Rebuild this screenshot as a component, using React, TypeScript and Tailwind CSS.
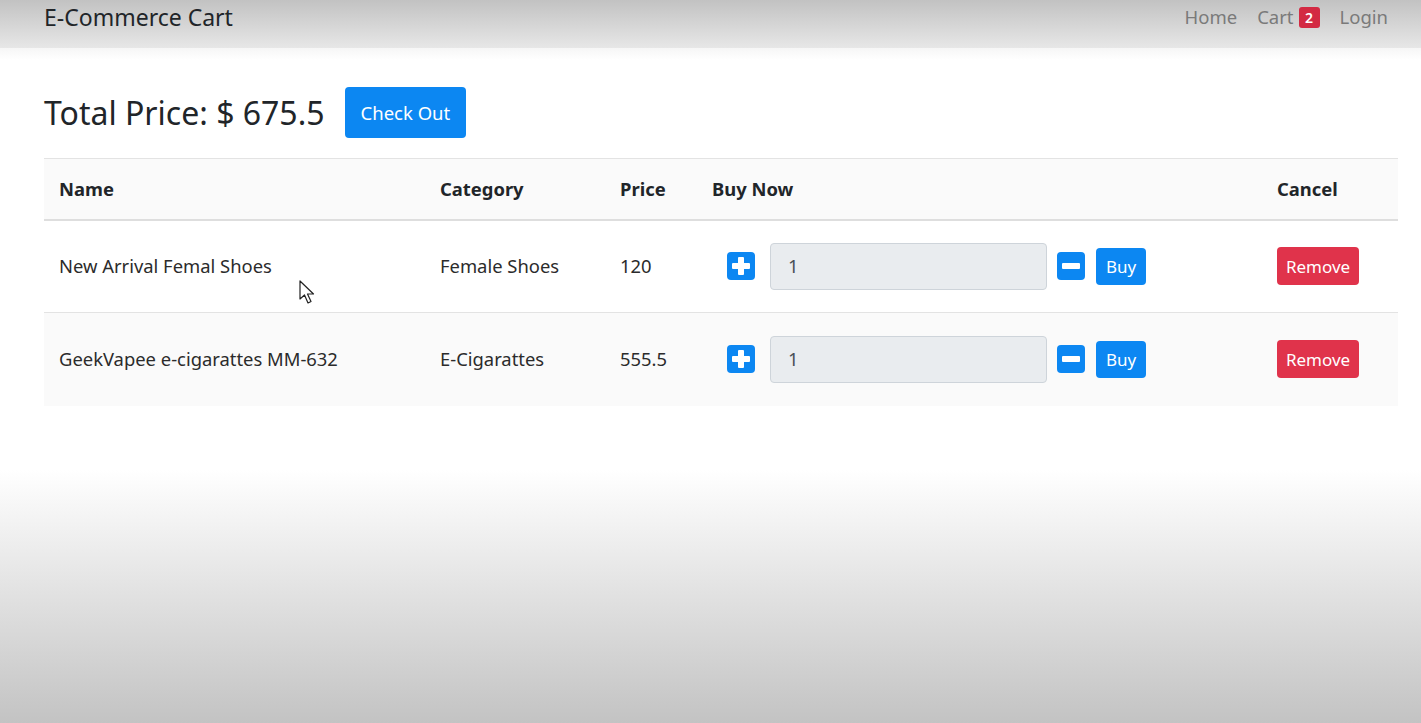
import React from 'react';

type CartItem = { name: string; category: string; price: string; qty: number };

const items: CartItem[] = [
    { name: 'New Arrival Femal Shoes', category: 'Female Shoes', price: '120', qty: 1 },
    { name: 'GeekVapee e-cigarattes MM-632', category: 'E-Cigarattes', price: '555.5', qty: 1 },
];

function SquareIcon({ minus }: { minus?: boolean }) {
    return (
        <svg width="28" height="28" viewBox="0 0 28 28" className="shrink-0">
            <rect x="0" y="0" width="28" height="28" rx="4" fill="#0c87f2" />
            {minus ? (
                <rect x="5" y="11" width="18" height="6" rx="1" fill="#fff" />
            ) : (
                <>
                    <rect x="5" y="11" width="18" height="6" rx="1" fill="#fff" />
                    <rect x="11" y="5" width="6" height="18" rx="1" fill="#fff" />
                </>
            )}
        </svg>
    );
}

function Cursor() {
    return (
        <svg width="18" height="26" viewBox="0 0 18 26" className="absolute left-[299px] top-[280px] pointer-events-none">
            <path
                d="M1 1 L1 19 L5.5 15 L9 23 L12 21.5 L8.5 14 L14.5 14 Z"
                fill="#fff"
                stroke="#222"
                strokeWidth="1.2"
                strokeLinejoin="round"
            />
        </svg>
    );
}

export default function App() {
    return (
        <div className="relative min-h-[723px] bg-[linear-gradient(to_bottom,#ffffff_0px,#ffffff_470px,#c3c3c3_723px)] font-['Noto_Sans','Open_Sans',sans-serif]">
            {/* navbar */}
            <nav className="h-[48px] bg-[linear-gradient(to_bottom,#c2c2c2,#e7e7e7)] pl-[44px] pr-[33px] flex justify-between">
                <div className="h-[34px] flex items-center text-[23px] text-[#212529]">E-Commerce Cart</div>
                <div className="h-[34px] flex items-center gap-[20px] text-[18.5px] text-[#7a7a7a]">
                    <span>Home</span>
                    <span className="flex items-center gap-[5px]">
                        Cart
                        <span className="bg-[#d32a43] text-white text-[14px] font-semibold rounded-[3px] h-[21px] w-[21px] flex items-center justify-center">2</span>
                    </span>
                    <span>Login</span>
                </div>
            </nav>
            <div className="h-[12px] bg-[linear-gradient(to_bottom,#f6f6f6,#ffffff)]" />

            <main className="pl-[44px] pr-[23px]">
                <div className="flex items-center gap-[20px] mt-[27px]">
                    <h2 className="text-[32px] text-[#212529] leading-none">Total Price: $ 675.5</h2>
                    <button className="h-[51px] px-[16px] rounded-[4px] bg-[#0c87f2] text-white text-[18.5px]">Check Out</button>
                </div>

                <table className="w-full mt-[20px] border-t border-[#e3e3e3] text-[18.4px] text-[#2b2b2b]">
                    <thead>
                        <tr className="h-[61px] bg-[#fafafa] border-b-2 border-[#dedede] text-left">
                            <th className="w-[381px] pl-[15px] font-bold text-[#212529]">Name</th>
                            <th className="w-[180px] pl-[15px] font-bold text-[#212529]">Category</th>
                            <th className="w-[92px] pl-[15px] font-bold text-[#212529]">Price</th>
                            <th className="w-[565px] pl-[15px] font-bold text-[#212529]">Buy Now</th>
                            <th className="pl-[15px] font-bold text-[#212529]">Cancel</th>
                        </tr>
                    </thead>
                    <tbody>
                        {items.map((item, i) => (
                            <tr key={item.name} className={`h-[93px] border-b border-[#e3e3e3] ${i % 2 === 1 ? 'bg-[#fafafa] border-b-0' : 'bg-white'}`}>
                                <td className="pl-[15px]">{item.name}</td>
                                <td className="pl-[15px]">{item.category}</td>
                                <td className="pl-[15px]">{item.price}</td>
                                <td className="pl-[30px]">
                                    <div className="flex items-center">
                                        <SquareIcon />
                                        <div className="ml-[15px] w-[277px] h-[47px] rounded-[4px] bg-[#e9ecef] border border-[#ced4da] flex items-center pl-[17px] text-[#495057]">
                                            {item.qty}
                                        </div>
                                        <div className="ml-[10px]">
                                            <SquareIcon minus />
                                        </div>
                                        <button className="ml-[11px] h-[37px] w-[50px] rounded-[4px] bg-[#0c87f2] text-white text-[17px]">Buy</button>
                                    </div>
                                </td>
                                <td className="pl-[15px]">
                                    <button className="h-[38px] w-[82px] rounded-[4px] bg-[#e0334b] text-white text-[17px]">Remove</button>
                                </td>
                            </tr>
                        ))}
                    </tbody>
                </table>
            </main>
            <Cursor />
        </div>
    );
}
